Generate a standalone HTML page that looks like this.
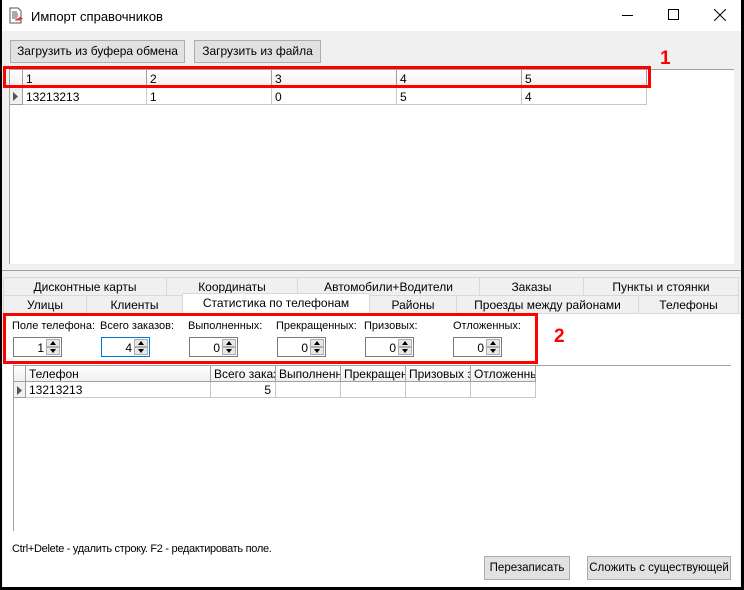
<!DOCTYPE html>
<html><head><meta charset="utf-8"><style>
*{box-sizing:border-box;margin:0;padding:0}
body{width:744px;height:590px;background:#000;position:relative;overflow:hidden;font-family:"Liberation Sans","DejaVu Sans",sans-serif;font-size:12px;color:#000}
.a{position:absolute}
.win{left:2px;top:0;width:739px;height:587px;background:#f0f0f0}
.tb{left:2px;top:0;width:739px;height:31px;background:#fff}
.btn{position:absolute;background:#e1e1e1;border:1px solid #adadad;text-align:center;font-size:12px}
.cell{position:absolute;border-right:1px solid #c8c8c8;border-bottom:1px solid #c8c8c8;padding-left:3px;font-size:12px;line-height:18px;white-space:nowrap;overflow:hidden}
.hd{background:linear-gradient(#fff,#f0f0f0);border-right:1px solid #a0a0a0;border-bottom:1px solid #a0a0a0}
.tab{position:absolute;border:1px solid #d9d9d9;background:#f0f0f0;text-align:center;font-size:12px;line-height:18px;height:19px}
.red{position:absolute;border:3px solid #f00}
.spin{position:absolute;width:49px;height:20px;border:1px solid #7a7a7a;background:#fff}
.spin span{position:absolute;right:17px;top:3px;font-size:12px}
.spin i{position:absolute;right:1px;width:14px;height:8px;background:#e8e8e8;border:1px solid #adadad}
.spin i:after{content:"";position:absolute;left:3px;border-left:3px solid transparent;border-right:3px solid transparent}
.up{top:1px}.up:after{top:1px;border-bottom:4px solid #000}
.dn{top:9px}.dn:after{top:1px;border-top:4px solid #000}
.lbl{position:absolute;top:320px;font-size:11px}
</style></head><body>
<div class="a win"></div>
<div class="a tb"></div>
<svg class="a" style="left:9px;top:7px" width="14" height="17" viewBox="0 0 14 17"><path d="M1 1h8l3 3v12H1z" fill="#fff" stroke="#555"/><path d="M3 5h5M3 7h6M3 9h6M3 11h5" stroke="#555"/><path d="M6 13h5l2-1.5-2-1.5" fill="#e33" stroke="#e33"/></svg>
<div class="a" style="left:31px;top:9px;font-size:13px">Импорт справочников</div>
<div class="a" style="left:622px;top:15px;width:11px;height:1px;background:#000"></div>
<div class="a" style="left:668px;top:9px;width:11px;height:11px;border:1px solid #000"></div>
<svg class="a" style="left:714px;top:9px" width="12" height="12"><path d="M0 0L12 12M12 0L0 12" stroke="#000"/></svg>

<div class="btn" style="left:10px;top:40px;width:175px;height:23px;line-height:21px">Загрузить из буфера обмена</div>
<div class="btn" style="left:194px;top:40px;width:127px;height:23px;line-height:21px">Загрузить из файла</div>

<div class="a" style="left:9px;top:69px;width:725px;height:195px;background:#fff;border-left:1px solid #a0a0a0;border-top:1px solid #a0a0a0"></div>
<div class="cell hd" style="left:10px;top:70px;width:13px;height:18px"></div>
<div class="cell hd" style="left:23px;top:70px;width:124px;height:18px">1</div>
<div class="cell hd" style="left:147px;top:70px;width:125px;height:18px">2</div>
<div class="cell hd" style="left:272px;top:70px;width:125px;height:18px">3</div>
<div class="cell hd" style="left:397px;top:70px;width:125px;height:18px">4</div>
<div class="cell hd" style="left:522px;top:70px;width:125px;height:18px">5</div>
<div class="cell hd" style="left:10px;top:88px;width:13px;height:17px;background:#f0f0f0"><svg width="6" height="9" style="margin-top:4px"><path d="M0 0L5 4.5L0 9z" fill="#555"/></svg></div>
<div class="cell" style="left:23px;top:88px;width:124px;height:17px">13213213</div>
<div class="cell" style="left:147px;top:88px;width:125px;height:17px">1</div>
<div class="cell" style="left:272px;top:88px;width:125px;height:17px">0</div>
<div class="cell" style="left:397px;top:88px;width:125px;height:17px">5</div>
<div class="cell" style="left:522px;top:88px;width:125px;height:17px">4</div>
<div class="red" style="left:3px;top:66px;width:648px;height:22px"></div>
<div class="a" style="left:660px;top:48px;color:#f00;font-weight:bold;font-size:19px">1</div>

<div class="a" style="left:2px;top:270px;width:739px;height:1px;background:#a0a0a0"></div>

<div class="a" style="left:3px;top:313px;width:737px;height:274px;background:#fff;border-top:1px solid #d9d9d9"></div>
<div class="tab" style="left:3px;top:277px;width:164px">Дисконтные карты</div>
<div class="tab" style="left:166px;top:277px;width:132px">Координаты</div>
<div class="tab" style="left:297px;top:277px;width:183px">Автомобили+Водители</div>
<div class="tab" style="left:479px;top:277px;width:105px">Заказы</div>
<div class="tab" style="left:583px;top:277px;width:156px">Пункты и стоянки</div>
<div class="tab" style="left:3px;top:295px;width:84px">Улицы</div>
<div class="tab" style="left:86px;top:295px;width:97px">Клиенты</div>
<div class="tab" style="left:369px;top:295px;width:88px">Районы</div>
<div class="tab" style="left:456px;top:295px;width:183px">Проезды между районами</div>
<div class="tab" style="left:638px;top:295px;width:101px">Телефоны</div>
<div class="tab" style="left:182px;top:293px;width:188px;height:21px;background:#fff;border-bottom:none">Статистика по телефонам</div>

<div class="lbl" style="left:12px">Поле телефона:</div>
<div class="lbl" style="left:100px">Всего заказов:</div>
<div class="lbl" style="left:188px">Выполненных:</div>
<div class="lbl" style="left:276px">Прекращенных:</div>
<div class="lbl" style="left:364px">Призовых:</div>
<div class="lbl" style="left:453px">Отложенных:</div>
<div class="spin" style="left:13px;top:337px"><span>1</span><i class="up"></i><i class="dn"></i></div>
<div class="spin" style="left:101px;top:337px;border-color:#0078d7"><span>4</span><i class="up"></i><i class="dn"></i></div>
<div class="spin" style="left:189px;top:337px"><span>0</span><i class="up"></i><i class="dn"></i></div>
<div class="spin" style="left:277px;top:337px"><span>0</span><i class="up"></i><i class="dn"></i></div>
<div class="spin" style="left:365px;top:337px"><span>0</span><i class="up"></i><i class="dn"></i></div>
<div class="spin" style="left:453px;top:337px"><span>0</span><i class="up"></i><i class="dn"></i></div>
<div class="red" style="left:3px;top:313px;width:535px;height:51px"></div>
<div class="a" style="left:554px;top:326px;color:#f00;font-weight:bold;font-size:19px">2</div>

<div class="a" style="left:13px;top:365px;width:718px;height:1px;background:#a0a0a0"></div>
<div class="a" style="left:13px;top:365px;width:1px;height:166px;background:#a0a0a0"></div>
<div class="cell hd" style="left:14px;top:366px;width:12px;height:16px;line-height:16px"></div>
<div class="cell hd" style="left:26px;top:366px;width:185px;height:16px;line-height:16px">Телефон</div>
<div class="cell hd" style="left:211px;top:366px;width:65px;height:16px;line-height:16px">Всего заказов</div>
<div class="cell hd" style="left:276px;top:366px;width:65px;height:16px;line-height:16px">Выполненных</div>
<div class="cell hd" style="left:341px;top:366px;width:65px;height:16px;line-height:16px">Прекращенных</div>
<div class="cell hd" style="left:406px;top:366px;width:65px;height:16px;line-height:16px">Призовых заказов</div>
<div class="cell hd" style="left:471px;top:366px;width:65px;height:16px;line-height:16px">Отложенных</div>
<div class="cell hd" style="left:14px;top:382px;width:12px;height:16px;background:#f0f0f0"><svg width="6" height="9" style="margin-top:3px"><path d="M0 0L5 4.5L0 9z" fill="#555"/></svg></div>
<div class="cell" style="left:26px;top:382px;width:185px;height:16px;line-height:17px">13213213</div>
<div class="cell" style="left:211px;top:382px;width:65px;height:16px;line-height:17px;text-align:right;padding-right:4px">5</div>
<div class="cell" style="left:276px;top:382px;width:65px;height:16px"></div>
<div class="cell" style="left:341px;top:382px;width:65px;height:16px"></div>
<div class="cell" style="left:406px;top:382px;width:65px;height:16px"></div>
<div class="cell" style="left:471px;top:382px;width:65px;height:16px"></div>

<div class="a" style="left:12px;top:543px;font-size:11px;letter-spacing:-0.3px">Ctrl+Delete - удалить строку. F2 - редактировать поле.</div>
<div class="btn" style="left:484px;top:556px;width:86px;height:24px;line-height:22px;font-size:11.5px">Перезаписать</div>
<div class="btn" style="left:587px;top:556px;width:144px;height:24px;line-height:22px;font-size:11.5px">Сложить с существующей</div>
</body></html>
